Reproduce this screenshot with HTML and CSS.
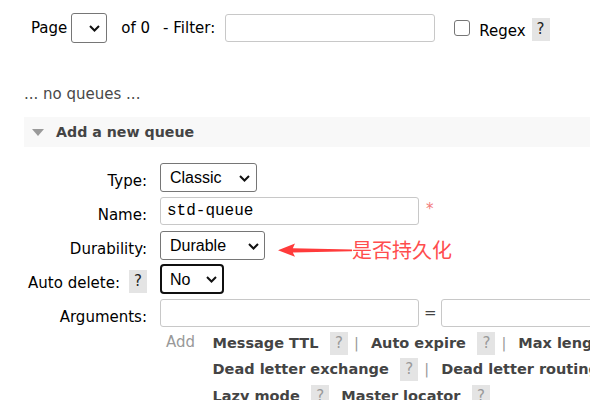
FILE: index.html
```html
<!DOCTYPE html>
<html lang="en">
<head>
<meta charset="utf-8">
<title>Queues</title>
<link rel="stylesheet" href="styles.css">
</head>
<body>
<div class="page">
  <div class="pager">
    <span class="txt-label">Page</span>
    <span class="sel sel-page">
      <select class="sel-ctl"><option></option></select>
      <svg class="chev" viewBox="0 0 11 7"><path d="M1 1l4.5 4.5L10 1" fill="none" stroke="#111" stroke-width="2"/></svg>
    </span>
    <span class="txt-label of">of 0</span>
    <span class="txt-label filter-label">- Filter:</span>
    <input class="field filter-input" type="text">
    <label class="regex"><input type="checkbox" class="chk"><span>Regex</span></label>
    <span class="help help-dark help-regex">?</span>
  </div>

  <p class="empty">... no queues ...</p>

  <div class="section">
    <h2 class="sec-head"><span class="tri"></span>Add a new queue</h2>
    <form class="qform">
      <div class="lbl"><span class="lbl-text">Type:</span></div>
      <div class="ctl">
        <span class="sel sel-type">
          <select class="sel-ctl"><option>Classic</option><option>Quorum</option></select>
          <svg class="chev" viewBox="0 0 11 7"><path d="M1 1l4.5 4.5L10 1" fill="none" stroke="#111" stroke-width="2"/></svg>
        </span>
      </div>

      <div class="lbl"><span class="lbl-text">Name:</span></div>
      <div class="ctl">
        <input class="field name-input" type="text" value="std-queue">
        <span class="req">*</span>
      </div>

      <div class="lbl"><span class="lbl-text">Durability:</span></div>
      <div class="ctl">
        <span class="sel sel-dur">
          <select class="sel-ctl"><option>Durable</option><option>Transient</option></select>
          <svg class="chev" viewBox="0 0 11 7"><path d="M1 1l4.5 4.5L10 1" fill="none" stroke="#111" stroke-width="2"/></svg>
        </span>
        <span class="annot">
          <svg class="annot-arrow" viewBox="0 0 74 16"><path d="M0 8.2L17 1.5L14.8 6.2L74 7.6L74 9.2L14.8 10.4L17 14.8Z" fill="#ff3b3b"/></svg>
          <span class="annot-text">是否持久化</span>
        </span>
      </div>

      <div class="lbl"><span class="lbl-text">Auto delete:</span><span class="help help-dark help-lbl">?</span></div>
      <div class="ctl">
        <span class="sel sel-auto">
          <select class="sel-ctl sel-focus"><option>No</option><option>Yes</option></select>
          <svg class="chev" viewBox="0 0 11 7"><path d="M1 1l4.5 4.5L10 1" fill="none" stroke="#111" stroke-width="2"/></svg>
        </span>
      </div>

      <div class="lbl"><span class="lbl-text">Arguments:</span></div>
      <div class="ctl ctl-args">
        <div class="arg-inputs">
          <input class="field arg-key" type="text">
          <span class="eq">=</span>
          <input class="field arg-val" type="text">
        </div>
        <div class="arg-add">
          <span class="add-lbl">Add</span>
          <div class="arg-lines">
            <div class="arg-line">
              <span class="arg-name">Message TTL</span><span class="help help-arg">?</span><span class="sep">|</span>
              <span class="arg-name">Auto expire</span><span class="help help-arg">?</span><span class="sep">|</span>
              <span class="arg-name">Max length</span><span class="help help-arg">?</span><span class="sep">|</span>
              <span class="arg-name">Max length bytes</span><span class="help help-arg">?</span>
            </div>
            <div class="arg-line">
              <span class="arg-name">Dead letter exchange</span><span class="help help-arg">?</span><span class="sep">|</span>
              <span class="arg-name">Dead letter routing key</span><span class="help help-arg">?</span>
            </div>
            <div class="arg-line">
              <span class="arg-name">Lazy mode</span><span class="help help-arg">?</span>
              <span class="arg-name arg-gap">Master locator</span><span class="help help-arg">?</span>
            </div>
          </div>
        </div>
      </div>
    </form>
  </div>
</div>
</body>
</html>
```

FILE: styles.css
```css
html, body {
  margin: 0;
  padding: 0;
  overflow: hidden;
  background: #fff;
}

body {
  font-family: "DejaVu Sans", Verdana, sans-serif;
  font-size: 15px;
  color: #000;
  width: 590px;
  height: 400px;
}

.page {
  padding-left: 24px;
}

/* ---------- text fields ---------- */
.field {
  box-sizing: border-box;
  height: 28px;
  margin: 0;
  padding: 0 6px;
  border: 1px solid #c8c8c8;
  border-radius: 3px;
  background: #fff;
  font-family: "Liberation Mono", "Courier New", monospace;
  font-size: 16px;
  color: #000;
  flex: none;
}

/* ---------- pager row ---------- */
.pager {
  display: flex;
  align-items: center;
  height: 30px;
  padding-top: 13px;
  padding-left: 7px;
  white-space: nowrap;
}

.txt-label {
  line-height: 17px;
}

.sel-page {
  margin-left: 4px;
}

.of {
  margin-left: 14px;
}

.filter-label {
  margin-left: 13px;
}

.pager .filter-input {
  margin-left: 10px;
  width: 210px;
}

.regex {
  display: flex;
  align-items: center;
  margin-left: 19px;
}

.regex span {
  margin-left: 9px;
  padding-top: 6px;
  line-height: 17px;
}

.chk {
  -webkit-appearance: none;
  appearance: none;
  margin: 0;
  width: 16px;
  height: 16px;
  border: 1.5px solid #767676;
  border-radius: 3px;
  background: #fff;
  box-sizing: border-box;
}

.help-regex {
  margin-left: 6px;
  margin-top: 3px;
}

/* ---------- help boxes ---------- */
.help {
  display: inline-flex;
  align-items: center;
  justify-content: center;
  width: 18px;
  height: 23px;
  background: #e4e4e4;
  font-size: 15px;
  line-height: 23px;
  flex: none;
}

.help-dark {
  color: #222;
}

.help-arg {
  color: #999;
  margin-left: 11.5px;
}

/* ---------- selects ---------- */
.sel {
  position: relative;
  display: inline-block;
  flex: none;
}

.sel-ctl {
  -webkit-appearance: none;
  appearance: none;
  display: block;
  margin: 0;
  box-sizing: border-box;
  height: 29px;
  padding: 0 0 0 9px;
  border: 1px solid #767676;
  border-radius: 3px;
  background: #fff;
  color: #000;
  font-family: "Liberation Sans", Arial, sans-serif;
  font-size: 16px;
}

.sel .chev {
  position: absolute;
  right: 7px;
  top: 50%;
  margin-top: -3px;
  width: 11px;
  height: 7px;
  pointer-events: none;
}

.sel-page .sel-ctl {
  width: 36px;
  height: 30px;
}

.sel-type .sel-ctl {
  width: 97px;
}

.sel-dur .sel-ctl {
  width: 105px;
}

.sel-dur .chev {
  right: 6px;
}

.sel-auto {
  margin-top: -1px;
}

.sel-auto .sel-ctl {
  width: 64px;
  height: 30px;
}

.sel-auto .sel-focus {
  border: 2px solid #101010;
  border-radius: 4px;
  padding-left: 8px;
}

/* ---------- empty text ---------- */
.empty {
  margin: 43px 0 0 0;
  line-height: 17px;
  color: #484848;
}

/* ---------- section ---------- */
.section {
  margin-top: 14px;
}

.sec-head {
  margin: 0;
  height: 30px;
  display: flex;
  align-items: center;
  padding-left: 8px;
  background: #f8f8f8;
  font-size: 14.2px;
  font-weight: bold;
  color: #444;
  line-height: 17px;
}

.tri {
  width: 0;
  height: 0;
  border-left: 6px solid transparent;
  border-right: 6px solid transparent;
  border-top: 7px solid #9a9a9a;
  margin-right: 12px;
  margin-top: 1px;
}

/* ---------- form ---------- */
.qform {
  margin-top: 16px;
  display: grid;
  grid-template-columns: 123px 1fr;
  column-gap: 13px;
  row-gap: 5px;
}

.lbl {
  display: flex;
  justify-content: flex-end;
  align-items: flex-start;
  height: 29px;
}

.lbl-text {
  padding-top: 9.5px;
  line-height: 17px;
  white-space: nowrap;
}

.help-lbl {
  margin-left: 9px;
  margin-top: 5px;
}

.ctl {
  display: flex;
  align-items: flex-start;
  min-height: 29px;
  white-space: nowrap;
}

.name-input {
  width: 259px;
}

.req {
  margin-left: 7px;
  margin-top: 4px;
  color: #f27a7a;
  font-size: 15px;
  line-height: 17px;
}

.annot {
  display: flex;
  align-items: center;
  align-self: flex-end;
  height: 20px;
  margin-left: 13px;
}

.annot-arrow {
  width: 74px;
  height: 16px;
  display: block;
}

.annot-text {
  font-family: "Noto Sans CJK SC", "Noto Sans CJK JP", sans-serif;
  font-size: 20px;
  line-height: 20px;
  color: #ff4d4d;
}

/* ---------- arguments ---------- */
.ctl-args {
  flex-direction: column;
}

.arg-inputs {
  display: flex;
  align-items: center;
}

.arg-key,
.arg-val {
  width: 259px;
}

.eq {
  margin: 0 4px 0 5px;
  color: #444;
  line-height: 17px;
}

.arg-add {
  display: flex;
  align-items: flex-start;
  margin-top: 3px;
}

.add-lbl {
  padding: 0 17.5px 0 6px;
  color: #999;
  line-height: 26.5px;
  margin-top: -1px;
}

.arg-lines {
  display: flex;
  flex-direction: column;
}

.arg-line {
  display: flex;
  align-items: center;
  height: 26.5px;
  white-space: nowrap;
}

.arg-name {
  font-weight: bold;
  font-size: 14.5px;
  color: #444;
  line-height: 17px;
}

.sep {
  color: #999;
  font-size: 14.5px;
  margin: 0 12px 0 6px;
  line-height: 17px;
}

.arg-gap {
  margin-left: 12px;
}
```
